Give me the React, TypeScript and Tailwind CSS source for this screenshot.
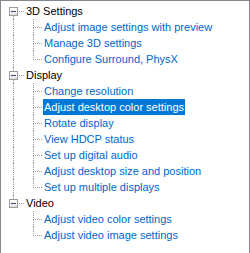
type Group = { title: string; items: string[] };

const groups: Group[] = [
  {
    title: "3D Settings",
    items: ["Adjust image settings with preview", "Manage 3D settings", "Configure Surround, PhysX"],
  },
  {
    title: "Display",
    items: [
      "Change resolution",
      "Adjust desktop color settings",
      "Rotate display",
      "View HDCP status",
      "Set up digital audio",
      "Adjust desktop size and position",
      "Set up multiple displays",
    ],
  },
  {
    title: "Video",
    items: ["Adjust video color settings", "Adjust video image settings"],
  },
];

const selected = "Adjust desktop color settings";

// dotted tree connectors
const dot = "border-dotted border-[#9a9a9a]";

const ParentRow = ({ title, first, last }: { title: string; first: boolean; last: boolean }) => (
  <div className="flex h-4">
    <div className="flex w-[24px] h-full shrink-0 pl-[8px]">
      <div className="flex flex-col items-center w-[9px] h-full">
        <div className={`h-[4px] w-0 ${first ? "" : `border-l ${dot}`}`} />
        <div className="w-[9px] h-[9px] shrink-0 border border-[#9a9a9a] bg-gradient-to-b from-white to-[#e2e2e2] flex items-center justify-center">
          <div className="w-[5px] h-px bg-[#3c4a6a]" />
        </div>
        <div className={`flex-1 w-0 ${last ? "" : `border-l ${dot}`}`} />
      </div>
      <div className={`w-[5px] h-0 ml-px mt-[8px] border-t ${dot}`} />
    </div>
    <span className="pl-px leading-4 text-black">{title}</span>
  </div>
);

const ChildRow = ({ label, groupLast, itemLast }: { label: string; groupLast: boolean; itemLast: boolean }) => {
  const active = label === selected;
  return (
    <div className="flex h-4">
      <div className="w-[20px] h-full shrink-0 pl-[12px]">
        <div className={`h-full w-0 ${groupLast ? "" : `border-l ${dot}`}`} />
      </div>
      <div className="grid grid-cols-[12px_1fr] grid-rows-[9px_7px] w-[21px] h-full shrink-0">
        <div />
        <div className={`border-l border-b ${dot}`} />
        <div />
        <div className={itemLast ? "" : `border-l ${dot}`} />
      </div>
      <span className={`ml-px px-px leading-4 ${active ? "bg-[#0078d7] text-white" : "text-[#0066cc]"}`}>{label}</span>
    </div>
  );
};

export default function App() {
  return (
    <div
      className="w-[250px] h-[253px] overflow-hidden bg-white border-t border-x border-[#828790] pt-[2px] text-[11px] whitespace-nowrap"
      style={{ fontFamily: "Tahoma, 'Liberation Sans', sans-serif" }}
    >
      {groups.map((g, gi) => (
        <div key={g.title}>
          <ParentRow title={g.title} first={gi === 0} last={gi === groups.length - 1} />
          {g.items.map((it, ii) => (
            <ChildRow
              key={it}
              label={it}
              groupLast={gi === groups.length - 1}
              itemLast={ii === g.items.length - 1}
            />
          ))}
        </div>
      ))}
    </div>
  );
}
